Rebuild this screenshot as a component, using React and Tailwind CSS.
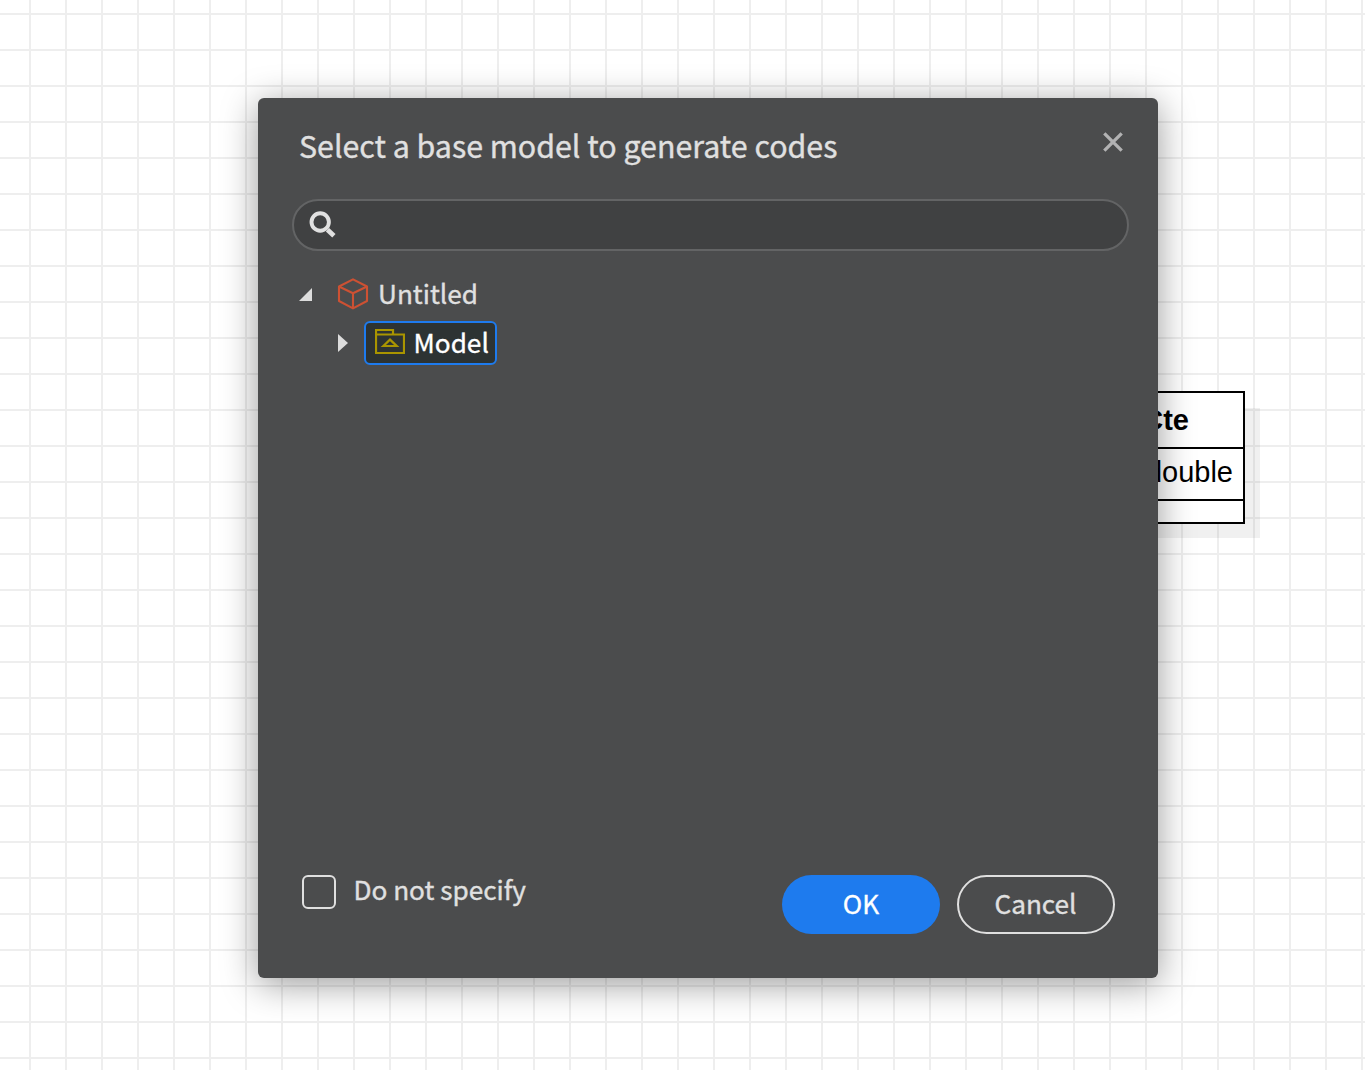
import React from "react";

function SearchIcon() {
  return (
    <svg className="ml-[14px] mt-[10px]" width="30" height="30" viewBox="0 0 30 30" fill="none">
      <circle cx="12.2" cy="11" r="8.7" stroke="#e0e0e0" strokeWidth="3.9" />
      <path d="M19.5 18.8 L25.9 24.8" stroke="#e0e0e0" strokeWidth="4.8" />
    </svg>
  );
}

function CubeIcon() {
  return (
    <svg width="32" height="32" viewBox="0 0 32 32" fill="none" stroke="#cd5133" strokeWidth="2.1" strokeLinejoin="round">
      <path d="M16 1.4 L30 8.5 V23 L16 30.4 L2 23 V8.5 Z" />
      <path d="M2 8.5 L16 15.2 L30 8.5 M16 15.2 V30.4" />
    </svg>
  );
}

function ModelIcon() {
  return (
    <svg width="30" height="25" viewBox="0 0 30 25" fill="none" stroke="#a99500" strokeWidth="2.2">
      <path d="M1 5.5 V1 H18 V5" />
      <path d="M1 5.5 H29 V24 H1 Z" />
      <path d="M8.3 17 L15 10.6 L21.7 17 Z" />
    </svg>
  );
}

function ClassBox() {
  return (
    <div className="absolute left-[1018px] top-[391px] h-[132.5px] w-[227px] border-2 border-black bg-white font-['Liberation_Sans'] text-black shadow-[16.5px_15.5px_0_-1.5px_rgba(0,0,0,0.06)]">
      <div className="flex h-[56px] justify-end border-b-2 border-black pr-[54px] text-[29px] leading-[54px] font-bold">Cte</div>
      <div className="flex h-[52px] justify-end border-b-2 border-black pr-[10px] text-[29px] leading-[46px]">double</div>
    </div>
  );
}

function Dialog() {
  return (
    <div className="absolute left-[258px] top-[98px] flex h-[880px] w-[900px] flex-col rounded-[6px] bg-[#4b4c4d] font-['Noto_Sans_CJK_SC',sans-serif] text-[#e0e0e0] shadow-[0_6px_36px_rgba(0,0,0,0.4)] [-webkit-text-stroke:0.35px]">
      <header className="flex h-[101px] justify-between pl-[41px] pr-[35px]">
        <h1 className="mt-[23px] text-[30.35px] leading-[48px] whitespace-nowrap">Select a base model to generate codes</h1>
        <svg className="mt-[34px]" width="20" height="20" viewBox="0 0 20 20" fill="none">
          <path d="M1.3 1.3 L18.7 18.7 M18.7 1.3 L1.3 18.7" stroke="#b2b2b3" strokeWidth="3.3" />
        </svg>
      </header>
      <div className="ml-[34px] h-[52px] w-[837px] rounded-full border-2 border-[#636465] bg-[#404142]">
        <SearchIcon />
      </div>
      <main className="flex-1 pt-[18px]">
        <div className="flex h-[52px] items-center">
          <svg className="-mt-[2px] ml-[41px]" width="13" height="13" viewBox="0 0 13 13"><path d="M13 0 V13 H0 Z" fill="#dcdcdc" /></svg>
          <div className="ml-[25px] -mt-[3px]"><CubeIcon /></div>
          <span className="ml-[9px] -mt-[5px] text-[26.2px] leading-[40px]">Untitled</span>
        </div>
        <div className="flex h-[44px] items-center">
          <svg className="ml-[80px]" width="10" height="18" viewBox="0 0 10 18"><path d="M0 0 L10 9 L0 18 Z" fill="#dcdcdc" /></svg>
          <div className="ml-[16px] flex h-[44px] w-[133px] items-center rounded-[6px] border-2 border-[#1e7bee] bg-[#2d3333] pl-[9px] text-white">
            <div className="-mt-[3px]"><ModelIcon /></div>
            <span className="ml-[8.5px] -mt-[2px] text-[26.2px] leading-[40px]">Model</span>
          </div>
        </div>
      </main>
      <footer className="flex h-[103px] pl-[44px]">
        <label className="flex h-[34px] w-[480px] items-center gap-[17.4px]">
          <span className="h-[34px] w-[34px] rounded-[6px] border-2 border-[#e0e0e0]" />
          <span className="-mt-[7px] text-[26.2px] leading-[40px]">Do not specify</span>
        </label>
        <button className="h-[59px] w-[158px] rounded-full bg-[#1e7bee] pb-[4px] text-[26.2px] leading-[54px] text-white">OK</button>
        <button className="ml-[17px] h-[59px] w-[158px] rounded-full border-2 border-[#e0e0e0] pr-[1px] pb-[4px] text-[26.2px] leading-[50px]">Cancel</button>
      </footer>
    </div>
  );
}

export default function App() {
  return (
    <div className="relative h-[1070px] w-[1365px] overflow-hidden bg-white bg-[linear-gradient(#eeeeee_2px,transparent_2px),linear-gradient(90deg,#eeeeee_2px,transparent_2px)] bg-[length:36px_36px] bg-[position:29px_13px]">
      <ClassBox />
      <Dialog />
    </div>
  );
}
